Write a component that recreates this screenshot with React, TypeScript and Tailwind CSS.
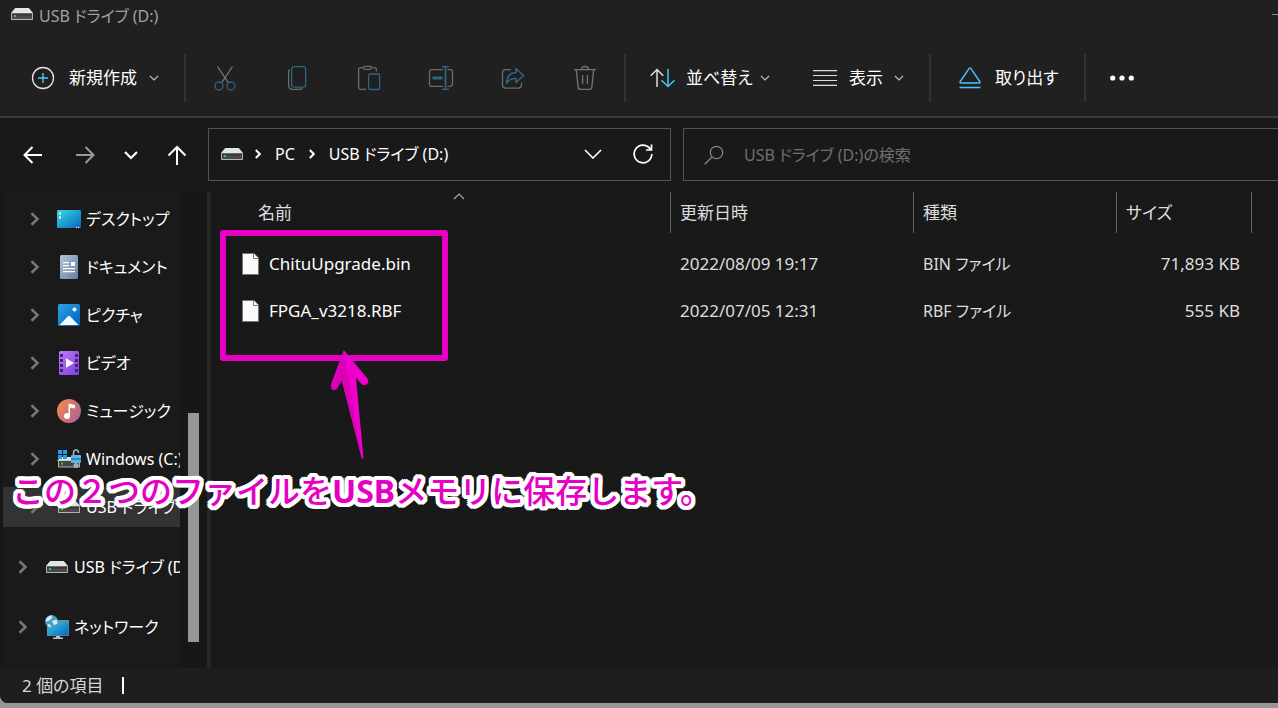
import type { ReactNode } from "react";

type IconProps = { className?: string };

const GREY = "#6b6b6b";
const DIM_BLUE = "#2f6482";
const BLUE = "#4cc2ff";

function DriveIcon({ className = "" }: IconProps) {
  return (
    <svg className={`shrink-0 ${className}`} width="22" height="12" viewBox="0 0 22 12" aria-hidden="true">
      <path d="M4.2 0h13.6L22 5H0z" fill="#e4e5e8" />
      <rect x="0" y="5" width="22" height="7" rx="0.8" fill="#b4b4b4" />
      <rect x="1" y="5.6" width="20" height="5.4" fill="#4a4a4a" />
      <rect x="1" y="5.6" width="20" height="2" fill="#383838" />
      <rect x="3" y="7" width="2" height="2" fill="#29d329" />
    </svg>
  );
}

function SmallChevron() {
  return (
    <svg width="10" height="6" viewBox="0 0 10 6" fill="none" stroke="#bdbdbd" strokeWidth="1.2" className="shrink-0" aria-hidden="true">
      <path d="M1 1l4 4 4-4" />
    </svg>
  );
}

function NewIcon() {
  return (
    <svg width="24" height="24" viewBox="0 0 24 24" fill="none" className="-ml-px shrink-0" aria-hidden="true">
      <circle cx="12" cy="12" r="10.5" stroke="#e6e6e6" strokeWidth="1.3" />
      <path d="M12 7v10M7 12h10" stroke={BLUE} strokeWidth="1.4" />
    </svg>
  );
}

function CutIcon() {
  return (
    <svg width="24" height="26" viewBox="0 0 24 26" fill="none" strokeWidth="1.3" aria-hidden="true">
      <path d="M4.5 1.5l11 16.5M19.5 1.5L8.500 18" stroke="#7a7a7a" />
      <circle cx="6" cy="21" r="4" stroke={DIM_BLUE} />
      <circle cx="18" cy="21" r="4" stroke={DIM_BLUE} />
    </svg>
  );
}

function CopyIcon() {
  return (
    <svg width="24" height="26" viewBox="0 0 24 26" fill="none" strokeWidth="1.3" aria-hidden="true">
      <path d="M4.600 4.500Q3.600 5.500 3.600 7v13q0 4.400 4.400 4.400h7q1.500 0 2.500-1" stroke={GREY} />
      <rect x="6.600" y="1.600" width="14" height="20.500" rx="2.500" stroke={DIM_BLUE} />
    </svg>
  );
}

function PasteIcon() {
  return (
    <svg width="24" height="26" viewBox="0 0 24 26" fill="none" strokeWidth="1.3" aria-hidden="true">
      <path d="M9 24.400H3.600a2 2 0 0 1-2-2V4.600a2 2 0 0 1 2-2h2.900M14.500 2.600h2.900a2 2 0 0 1 2 2V6.500" stroke={GREY} />
      <rect x="6.500" y="1.300" width="8" height="3" rx="1.500" stroke={GREY} />
      <rect x="11.600" y="9" width="11" height="15.500" rx="1.500" stroke={DIM_BLUE} />
    </svg>
  );
}

function RenameIcon() {
  return (
    <svg width="26" height="26" viewBox="0 0 26 26" fill="none" strokeWidth="1.3" aria-hidden="true">
      <path d="M15 4.600H4a2.500 2.500 0 0 0-2.500 2.500v11.800A2.500 2.500 0 0 0 4 21.400h11M19.500 4.600h2.500a2.500 2.500 0 0 1 2.500 2.500v11.800a2.500 2.500 0 0 1-2.500 2.500h-2.500" stroke={GREY} />
      <path d="M14 1.600h7M14 24.400h7" stroke={DIM_BLUE} />
      <path d="M17.500 1.600v22.800" stroke={DIM_BLUE} strokeWidth="1.800" />
      <path d="M4.500 13h10" stroke={DIM_BLUE} strokeWidth="3" />
    </svg>
  );
}

function ShareIcon() {
  return (
    <svg width="26" height="26" viewBox="0 0 26 26" fill="none" strokeWidth="1.3" aria-hidden="true">
      <path d="M11 4.600H5.500a3 3 0 0 0-3 3v12.500a3 3 0 0 0 3 3h13a3 3 0 0 0 3-3v-2" stroke={GREY} />
      <path d="M16 3.500l7.500 7-7.500 7v-4q-6-.5-9.500 4.500 .5-10 9.500-10.500z" stroke={DIM_BLUE} strokeWidth="1.600" strokeLinejoin="round" />
    </svg>
  );
}

function DeleteIcon() {
  return (
    <svg width="24" height="26" viewBox="0 0 24 26" fill="none" stroke="#757575" strokeWidth="1.3" aria-hidden="true">
      <path d="M1 4.600h22M8.500 4.500q0-3 3.500-3t3.500 3M3.300 4.600l1.900 17.800q.2 2 2.200 2h9.200q2 0 2.200-2l1.900-17.800M9.600 10v9M14.400 10v9" />
    </svg>
  );
}

function SortIcon() {
  return (
    <svg width="26" height="20" viewBox="0 0 26 20" fill="none" strokeWidth="1.500" className="shrink-0" aria-hidden="true">
      <path d="M7 19V1.500M.7 7.800L7 1.500l6.300 6.300" stroke="#dcdcdc" />
      <path d="M18 1v17.500M11.500 12.200l6.500 6.300 6.500-6.300" stroke={BLUE} />
    </svg>
  );
}

function ViewIcon() {
  return (
    <svg width="24" height="16" viewBox="0 0 24 16" fill="none" stroke="#dedede" strokeWidth="1.200" className="shrink-0" aria-hidden="true">
      <path d="M0 .6h24M0 5.500h24M0 10.500h24M0 15.400h24" />
    </svg>
  );
}

function EjectIcon() {
  return (
    <svg width="22" height="22" viewBox="0 0 22 22" fill="none" stroke={BLUE} strokeWidth="1.400" strokeLinejoin="round" className="shrink-0" aria-hidden="true">
      <path d="M10.200 1.300L1.200 14.500q-.7 1.500 .8 1.500h18q1.500 0 .8-1.500L11.800 1.300q-.8-.9-1.600 0zM.5 20.500h21" />
    </svg>
  );
}

function NavArrow({ kind }: { kind: "back" | "forward" | "recent" | "up" }) {
  const shapes = {
    back: "M19 10H1.500M9.500 2L1.500 10l8 8",
    forward: "M1 10h17.500M10.500 2l8 8-8 8",
    recent: "M4 7l6 6 6-6",
    up: "M10 20V2M1.500 10.500L10 2l8.500 8.500",
  };
  return (
    <svg
      width="20"
      height="20"
      viewBox="0 0 20 20"
      fill="none"
      stroke={kind === "forward" ? "#9a9a9a" : "#ffffff"}
      strokeWidth={kind === "recent" ? 2.2 : 2}
      aria-hidden="true"
    >
      <path d={shapes[kind]} />
    </svg>
  );
}

function CrumbChevron() {
  return (
    <svg width="6" height="10" viewBox="0 0 6 10" fill="none" stroke="#fff" strokeWidth="2" className="shrink-0" aria-hidden="true">
      <path d="M.8 1l4 4-4 4" />
    </svg>
  );
}

function TreeChevron() {
  return (
    <svg width="10" height="14" viewBox="0 0 10 14" fill="none" stroke="#767676" strokeWidth="2.600" className="shrink-0" aria-hidden="true">
      <path d="M1.500 1.200L7.500 7l-6 5.800" />
    </svg>
  );
}

function DesktopIcon() {
  return (
    <svg width="24" height="18" viewBox="0 0 24 18" aria-hidden="true">
      <defs>
        <linearGradient id="desk" x1="0" y1="0" x2="1" y2="1">
          <stop offset="0" stopColor="#35dbe4" />
          <stop offset="1" stopColor="#0a63bf" />
        </linearGradient>
      </defs>
      <rect width="24" height="18" rx="1.200" fill="url(#desk)" />
      <path d="M2 2.500h2v2H2zM2 6.500h2v2H2zM19 17h1.200v1H19zM21 17h1.200v1H21z" fill="#fff" />
    </svg>
  );
}

function DocumentIcon() {
  return (
    <svg width="18" height="24" viewBox="0 0 18 24" aria-hidden="true">
      <defs>
        <linearGradient id="doc" x1="0" y1="0" x2="1" y2="1">
          <stop offset="0" stopColor="#b4c6da" />
          <stop offset="1" stopColor="#637f9f" />
        </linearGradient>
      </defs>
      <rect width="18" height="24" rx="1.500" fill="url(#doc)" />
      <path d="M3 7h6v1.200H3zM3 10h6v1.200H3zM11 7h4v4h-4zM3 13h12v1.200H3zM3 16h12v1.200H3z" fill="#fff" />
    </svg>
  );
}

function PictureIcon() {
  return (
    <svg width="22" height="22" viewBox="0 0 22 22" aria-hidden="true">
      <defs>
        <linearGradient id="pic" x1="0" y1="0" x2="1" y2="1">
          <stop offset="0" stopColor="#2aa4e8" />
          <stop offset="1" stopColor="#0560b4" />
        </linearGradient>
      </defs>
      <rect width="22" height="22" rx="1.500" fill="url(#pic)" />
      <path d="M1.500 21L10 12.300q1-1 2 0l8.500 8.700z" fill="#f3f8fc" />
      <circle cx="16.500" cy="5.500" r="2" fill="#fff" />
    </svg>
  );
}

function VideoIcon() {
  return (
    <svg width="20" height="24" viewBox="0 0 20 24" aria-hidden="true">
      <defs>
        <linearGradient id="vid" x1="0" y1="0" x2="1" y2="1">
          <stop offset="0" stopColor="#c07cf8" />
          <stop offset="1" stopColor="#7c3be0" />
        </linearGradient>
      </defs>
      <rect width="20" height="24" rx="1.500" fill="url(#vid)" />
      <path
        d="M1 3h3v3H1zM1 8h3v3H1zM1 13h3v3H1zM1 18h3v3H1zM16 3h3v3h-3zM16 8h3v3h-3zM16 13h3v3h-3zM16 18h3v3h-3z"
        fill="#42207c"
      />
      <path d="M7 7.300v9.400l8-4.700z" fill="#fff" />
    </svg>
  );
}

function MusicIcon() {
  return (
    <svg width="24" height="24" viewBox="0 0 24 24" aria-hidden="true">
      <defs>
        <linearGradient id="mus" x1="0" y1="0.2" x2="1" y2="0.900">
          <stop offset="0" stopColor="#f28a4e" />
          <stop offset="0.600" stopColor="#c96f78" />
          <stop offset="1" stopColor="#9b5fb0" />
        </linearGradient>
      </defs>
      <circle cx="12" cy="12" r="12" fill="url(#mus)" />
      <circle cx="10" cy="17" r="3" fill="#fff" />
      <path d="M11.500 17V4.500l6.500 1.500v3.500l-5-1V17z" fill="#fff" />
    </svg>
  );
}

function SystemDriveIcon() {
  return (
    <svg width="24" height="20" viewBox="0 0 24 20" aria-hidden="true">
      <path d="M4 8h14l4 4H0z" fill="#e4e5e8" />
      <rect x="1" y="11.500" width="22" height="7" rx="0.800" fill="#b4b4b4" />
      <rect x="2" y="12" width="20" height="5.500" fill="#444" />
      <rect x="4" y="13.500" width="2" height="2" fill="#29d329" />
      <path d="M1 1h4v4H1zM6 1h4v4H6zM1 6h4v4H1zM6 6h4v4H6z" fill="#1fa0ea" />
      <path d="M16.500 6V4q0-3 2.500-3t2.500 3" fill="none" stroke="#a9b4bd" strokeWidth="1.500" />
      <rect x="14" y="6" width="10" height="8" rx="1" fill="#5cb3e4" />
      <rect x="14" y="9" width="10" height="2" fill="#3487bd" />
      <circle cx="19" cy="16.500" r="2.500" fill="#9fb0bc" />
    </svg>
  );
}

function NetworkIcon() {
  return (
    <svg width="24" height="24" viewBox="0 0 24 24" aria-hidden="true">
      <defs>
        <linearGradient id="net" x1="0" y1="0" x2="1" y2="1">
          <stop offset="0" stopColor="#36d0e6" />
          <stop offset="1" stopColor="#0b62bd" />
        </linearGradient>
      </defs>
      <rect x="2" y="5" width="22" height="16" rx="1" fill="#808890" />
      <rect x="2.500" y="6.500" width="21" height="14" fill="url(#net)" />
      <path d="M11 21h4v1.500h3V24H8v-1.500h3z" fill="#b9c2c9" />
      <circle cx="6.500" cy="6.500" r="6.500" fill="#4b9fc7" />
      <path d="M2 2.500q3-2.500 5-2 .5 3-2 4.500T1 6.500Q.5 4.500 2 2.500zM7 6l4.500-1.500q1.500 2 .5 4.500l-3 1zM3 9l3 1-.5 2.500q-2-.5-3-2z" fill="#d4ecf5" />
    </svg>
  );
}

function FileIcon() {
  return (
    <svg width="17" height="22" viewBox="0 0 17 22" className="shrink-0" aria-hidden="true">
      <path d="M.5 .5H12L16.500 5v16.500H.5z" fill="#fafafa" stroke="#777" />
      <path d="M11.500 .5V5.500h5" fill="#fff" stroke="#777" />
    </svg>
  );
}

function Separator() {
  return <span className="h-12 w-0.5 shrink-0 bg-[#333333]" />;
}

const fileActions: { label: string; icon: ReactNode }[] = [
  { label: "切り取り", icon: <CutIcon /> },
  { label: "コピー", icon: <CopyIcon /> },
  { label: "貼り付け", icon: <PasteIcon /> },
  { label: "名前の変更", icon: <RenameIcon /> },
  { label: "共有", icon: <ShareIcon /> },
  { label: "削除", icon: <DeleteIcon /> },
];

const folders: { label: string; icon: ReactNode; selected?: boolean }[] = [
  { label: "デスクトップ", icon: <DesktopIcon /> },
  { label: "ドキュメント", icon: <DocumentIcon /> },
  { label: "ピクチャ", icon: <PictureIcon /> },
  { label: "ビデオ", icon: <VideoIcon /> },
  { label: "ミュージック", icon: <MusicIcon /> },
  { label: "Windows (C:)", icon: <SystemDriveIcon /> },
  { label: "USB ドライブ (D:)", icon: <DriveIcon />, selected: true },
];

const roots: { label: string; icon: ReactNode }[] = [
  { label: "USB ドライブ (D:)", icon: <DriveIcon /> },
  { label: "ネットワーク", icon: <NetworkIcon /> },
];

const files = [
  { name: "ChituUpgrade.bin", date: "2022/08/09 19:17", type: "BIN ファイル", size: "71,893 KB" },
  { name: "FPGA_v3218.RBF", date: "2022/07/05 12:31", type: "RBF ファイル", size: "555 KB" },
];

function Toolbar() {
  return (
    <div className="flex h-[78px] items-center overflow-hidden border-b-2 border-[#3a3a3a] bg-[#202020] text-[17px] leading-6 text-white">
      <button className="ml-8 mr-[25px] flex w-[127px] shrink-0 items-center whitespace-nowrap">
        <NewIcon />
        <span className="ml-3.5 flex-1 text-left">新規作成</span>
        <SmallChevron />
      </button>
      <Separator />
      <div className="mx-[3px] flex shrink-0">
        {fileActions.map((a) => (
          <button key={a.label} aria-label={a.label} disabled className="flex h-12 w-[72px] items-center justify-center">
            {a.icon}
          </button>
        ))}
      </div>
      <Separator />
      <button className="ml-6 flex w-[120px] shrink-0 items-center whitespace-nowrap">
        <SortIcon />
        <span className="ml-2.5 flex-1 text-left">並べ替え</span>
        <SmallChevron />
      </button>
      <button className="ml-[43px] mr-[25px] flex w-[91px] shrink-0 items-center whitespace-nowrap">
        <ViewIcon />
        <span className="ml-3 flex-1 text-left">表示</span>
        <SmallChevron />
      </button>
      <Separator />
      <button className="ml-7 mr-[27px] flex w-[98px] shrink-0 items-center gap-3.5 whitespace-nowrap">
        <EjectIcon />
        取り出す
      </button>
      <Separator />
      <button aria-label="その他" className="ml-6 flex shrink-0">
        <svg width="24" height="6" viewBox="0 0 24 6" fill="#fff" aria-hidden="true">
          <circle cx="2.700" cy="3" r="2.600" />
          <circle cx="12" cy="3" r="2.600" />
          <circle cx="21.300" cy="3" r="2.600" />
        </svg>
      </button>
    </div>
  );
}

function AddressRow() {
  return (
    <div className="flex h-[74px] items-center pb-px">
      <nav className="flex w-[208px] shrink-0 items-center pl-[9px]">
        <button aria-label="戻る" className="flex h-10 w-12 items-center justify-center">
          <NavArrow kind="back" />
        </button>
        <button aria-label="進む" className="ml-1 flex h-10 w-12 items-center justify-center">
          <NavArrow kind="forward" />
        </button>
        <button aria-label="最近表示した場所" className="flex h-10 w-11 items-center justify-center">
          <NavArrow kind="recent" />
        </button>
        <button aria-label="上へ" className="flex h-10 w-12 items-center justify-center">
          <NavArrow kind="up" />
        </button>
      </nav>
      <div className="flex h-[53px] w-[463px] shrink-0 items-center border border-[#535353] pb-0.5 pl-3 text-base text-white">
        <DriveIcon className="mr-3" />
        <CrumbChevron />
        <button className="mx-3.5">PC</button>
        <CrumbChevron />
        <button className="ml-3.5 whitespace-nowrap">USB ドライブ (D:)</button>
        <button aria-label="履歴" className="ml-auto flex h-10 w-12 items-center justify-center">
          <svg width="18" height="10" viewBox="0 0 18 10" fill="none" stroke="#fff" strokeWidth="1.600" aria-hidden="true">
            <path d="M1 1l8 8 8-8" />
          </svg>
        </button>
        <button aria-label="最新の情報に更新" className="mr-px flex h-10 w-[52px] items-center justify-center">
          <svg width="20" height="20" viewBox="0 0 20 20" fill="none" stroke="#fff" strokeWidth="1.700" aria-hidden="true">
            <path d="M18.800 10A8.800 8.800 0 1 1 16.800 4.400L18 5.700M18.500 .5v5.500h-5.500" />
          </svg>
        </button>
      </div>
      <label className="ml-3 flex h-[53px] min-w-0 flex-1 items-center border border-r-0 border-[#535353] pl-5">
        <svg width="20" height="20" viewBox="0 0 20 20" fill="none" stroke="#858585" strokeWidth="1.300" className="shrink-0" aria-hidden="true">
          <circle cx="12.500" cy="7.500" r="6.200" />
          <path d="M8 12L.8 19.200" />
        </svg>
        <input
          type="search"
          aria-label="検索"
          placeholder="USB ドライブ (D:)の検索"
          className="ml-5 min-w-0 flex-1 bg-transparent text-base text-white outline-none placeholder:text-[#6f6f6f]"
        />
      </label>
    </div>
  );
}

function Sidebar() {
  return (
    <aside className="flex w-[211px] shrink-0 border-r-4 border-[#262626] bg-[#171717]">
      <ul className="ml-[3px] w-[177px] overflow-hidden bg-[#1a1a1a] pt-[3px] text-base text-white">
        {folders.map((f) => (
          <li key={f.label} className="flex h-12 items-center">
            <a href="#" className={`flex h-10 w-full items-center whitespace-nowrap pl-[27px] ${f.selected ? "bg-[#333333]" : ""}`}>
              <TreeChevron />
              <span className="ml-[17px] mr-[5px] flex w-6 shrink-0 justify-center">{f.icon}</span>
              {f.label}
            </a>
          </li>
        ))}
        {roots.map((f, i) => (
          <li key={f.label} className={`flex h-[60px] items-center ${i === 0 ? "mt-1.5" : ""}`}>
            <a href="#" className="flex h-10 w-full items-center whitespace-nowrap pl-[15px]">
              <TreeChevron />
              <span className="ml-[17px] mr-[5px] flex w-6 shrink-0 justify-center">{f.icon}</span>
              {f.label}
            </a>
          </li>
        ))}
      </ul>
      <div className="ml-2 flex w-[11px] flex-col pb-[26px] pt-[221px]">
        <span className="flex-1 bg-[#969696]" />
      </div>
    </aside>
  );
}

function FileList() {
  return (
    <main className="min-w-0 flex-1">
      <table className="w-full table-fixed border-separate border-spacing-0 text-left text-[17px] leading-6 text-[#dedede]">
        <colgroup>
          <col className="w-[460px]" />
          <col className="w-[243px]" />
          <col className="w-[203px]" />
          <col className="w-[135px]" />
          <col />
        </colgroup>
        <thead>
          <tr className="h-[41px]">
            <th className="border-r border-[#636363] p-0 font-normal">
              <div className="relative ml-[37px] flex h-[41px] items-center pl-2.5">
                名前
                <svg width="12" height="7" viewBox="0 0 12 7" fill="none" stroke="#a5a5a5" strokeWidth="1.200" className="absolute left-1/2 top-px -translate-x-1/2" aria-hidden="true">
                  <path d="M1 6l5-5 5 5" />
                </svg>
              </div>
            </th>
            <th className="border-r border-[#636363] p-0 pl-[9px] font-normal">更新日時</th>
            <th className="border-r border-[#636363] p-0 pl-[9px] font-normal">種類</th>
            <th className="border-r border-[#636363] p-0 pl-[9px] font-normal">サイズ</th>
            <td />
          </tr>
        </thead>
        <tbody>
          <tr className="h-[7px]" />
          {files.map((f) => (
            <tr key={f.name} className="h-[47px]">
              <td className="p-0">
                <a href="#" className="ml-[31px] flex items-center gap-2.5 text-white">
                  <FileIcon />
                  {f.name}
                </a>
              </td>
              <td className="p-0 pl-[9px]">{f.date}</td>
              <td className="p-0 pl-[9px] text-base">{f.type}</td>
              <td className="p-0 pr-3 text-right">{f.size}</td>
              <td />
            </tr>
          ))}
        </tbody>
      </table>
    </main>
  );
}

function Annotation() {
  return (
    <div className="pointer-events-none absolute inset-0 overflow-hidden">
      <div className="absolute left-[220px] top-[230px] h-[131px] w-[228px] rounded-[3px] border-[6px] border-[#e600c3]" />
      <svg className="absolute left-[328px] top-[350px]" width="44" height="110" viewBox="0 0 44 110" aria-hidden="true">
        <path
          d="M15.600 .7Q16.300 .3 17 1.500L39.500 28.500Q41.500 31.500 39.300 34Q36 36.500 33 33.500L28 27.700 35.500 108.500H33.700L13.700 30 9.500 38Q7.500 41 4.500 39.500Q2 37.500 3.500 33.500Z"
          fill="#ee00cc"
        />
        <path d="M15.600 .7L34 108.500 13.700 30 9.500 38Q7.500 41 4.500 39.500Q2 37.500 3.500 33.500Z" fill="#d900b8" />
      </svg>
      <p className="absolute left-3 top-[467px] whitespace-nowrap text-[32px] font-medium leading-[48px] text-[#e600c3] [font-feature-settings:normal] [text-shadow:4px_0_#fff,-4px_0_#fff,0_4px_#fff,0_-4px_#fff,3px_3px_#fff,-3px_3px_#fff,3px_-3px_#fff,-3px_-3px_#fff,4px_2px_#fff,-4px_2px_#fff,4px_-2px_#fff,-4px_-2px_#fff,2px_4px_#fff,-2px_4px_#fff,2px_-4px_#fff,-2px_-4px_#fff,2px_2px_#fff,-2px_-2px_#fff]">
        この２つのファイルを<b className="font-bold">USB</b>メモリに保存します。
      </p>
    </div>
  );
}

export default function App() {
  return (
    <div className="relative flex min-h-screen flex-col bg-[#969696] pb-[5px] font-['Noto_Sans','Noto_Sans_CJK_JP',sans-serif] [font-feature-settings:'palt']">
      <div className="flex flex-1 flex-col overflow-hidden rounded-bl-lg bg-[#191919]">
        <header className="flex h-10 items-start bg-[#202020] pl-[11px] pt-1 text-[#a0a0a0]">
          <DriveIcon className="mr-1.5 mt-1" />
          <h1 className="text-base leading-6">USB ドライブ (D:)</h1>
          <button aria-label="最小化" className="ml-auto mt-2.5 h-px w-1.5 bg-[#8c8c8c]" />
        </header>
        <Toolbar />
        <AddressRow />
        <div className="flex flex-1">
          <Sidebar />
          <FileList />
        </div>
        <footer className="flex h-[35px] items-center bg-[#1e1e1e] pl-[22px] text-[17px] leading-6 text-[#d6d6d6]">
          2 個の項目
          <span className="ml-[18px] h-[17px] w-0.5 bg-white" />
        </footer>
      </div>
      <Annotation />
    </div>
  );
}
